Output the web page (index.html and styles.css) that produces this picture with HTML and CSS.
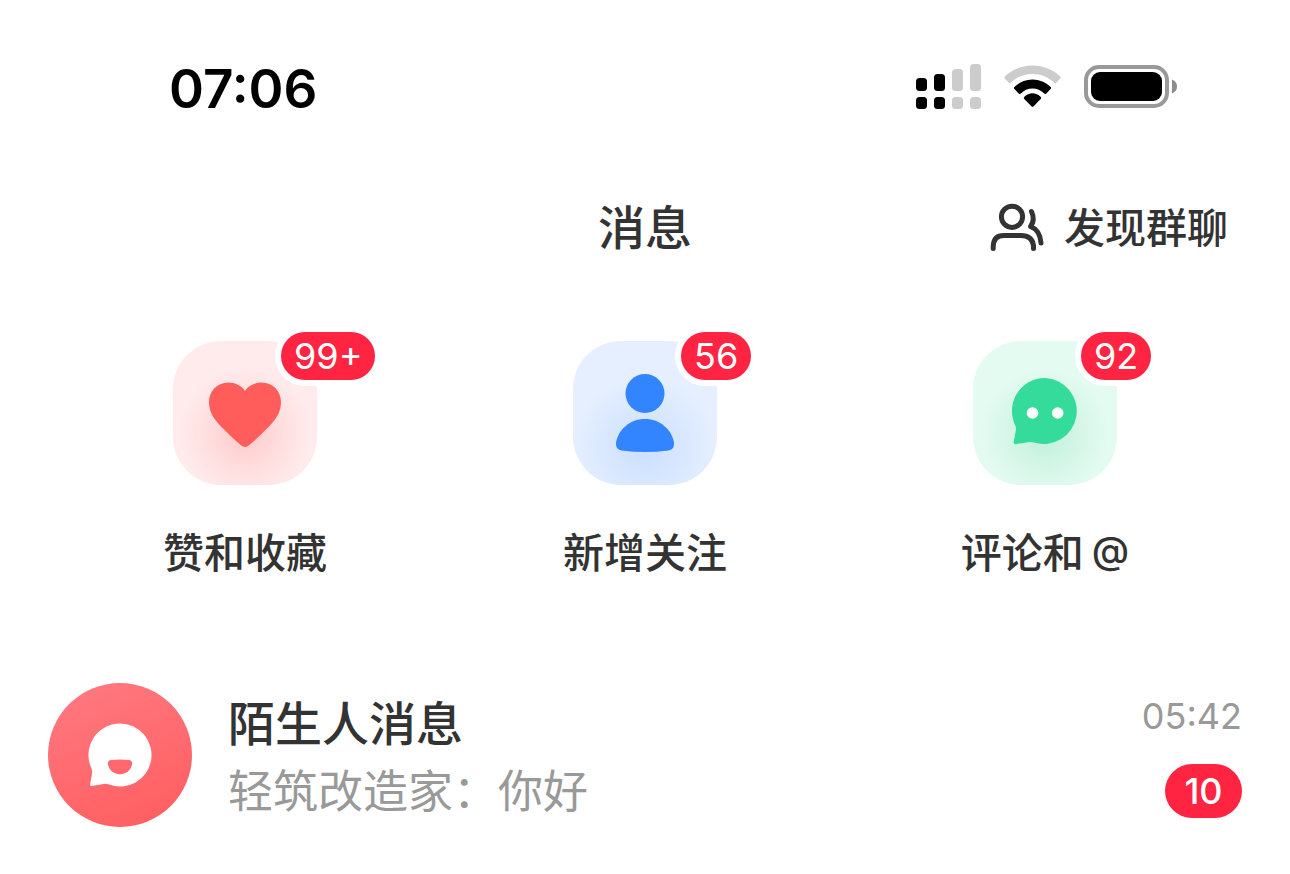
FILE: index.html
```html
<!DOCTYPE html>
<html lang="zh-CN">
<head>
<meta charset="utf-8">
<meta name="viewport" content="width=device-width, initial-scale=1">
<title>消息</title>
<link rel="stylesheet" href="styles.css">
</head>
<body>
<div class="status-bar">
  <time class="clock">07:06</time>
  <div class="indicators">
    <svg class="signal" width="66" height="46" viewBox="0 0 66 46" aria-hidden="true">
      <g fill="#000"><rect x="0" y="14" width="11" height="13" rx="3.5"/><rect x="18" y="10" width="11" height="17" rx="3.5"/><rect x="0" y="33" width="11" height="12" rx="3.5"/><rect x="18" y="33" width="11" height="12" rx="3.5"/></g>
      <g fill="#ccc"><rect x="36" y="5" width="11" height="22" rx="3.5"/><rect x="54" y="0" width="11" height="27" rx="3.5"/><rect x="36" y="33" width="11" height="12" rx="3.5"/><rect x="54" y="33" width="11" height="12" rx="3.5"/></g>
    </svg>
    <svg class="wifi" width="58" height="46" viewBox="0 0 58 46" aria-hidden="true">
      <path fill="#ccc" d="M.8 12.500C8 5.500 18 1.500 28.500 1.500S49 5.500 56.200 12.500q1 1 0 2L52.300 18.700q-1 1-2 0C44.500 13 37 10 28.500 10S12.500 13 6.700 18.700q-1 1-2 0L.8 14.500q-1-1 0-2z"/>
      <path fill="#000" d="M10.400 23C15.200 18.400 21.600 15.600 28.500 15.600s13.300 2.800 18.100 7.400q1 1 0 2l-4.300 4.500q-1 1-2 0c-3.200-2.900-7.300-4.900-11.800-4.900s-8.600 2-11.800 4.900q-1 1-2 0l-4.300-4.500q-1-1 0-2z"/>
      <path fill="#000" d="M20.400 32.700q3.500-3.500 8.100-3.500t8.100 3.500q1.300 1.100.1 2.400l-7.300 7.300q-.9.900-1.800 0l-7.300-7.300q-1.200-1.300.1-2.400z"/>
    </svg>
    <svg class="battery" width="94" height="46" viewBox="0 0 94 46" aria-hidden="true">
      <rect x="2" y="3" width="81" height="39" rx="13" fill="none" stroke="#999" stroke-width="4"/>
      <rect x="7" y="8" width="71" height="29" rx="9" fill="#000"/>
      <path d="M88 15.500q5 2 5 7t-5 7z" fill="#8c8c8c"/>
    </svg>
  </div>
</div>

<header class="top-bar">
  <h1 class="page-title">消息</h1>
  <a class="discover" href="#groups">
    <svg width="58" height="50" viewBox="0 0 58 50" fill="none" stroke="#333" stroke-width="5" stroke-linecap="round" aria-hidden="true">
      <circle cx="24" cy="13.800" r="10.600"/>
      <path d="M5.200 45.500V43.500Q5.500 32.600 16 32.600H33Q44 32.600 45.500 42.500V45.500"/>
      <path stroke-linejoin="round" d="M43.500 8.500Q47.500 17 42.500 23.500Q52 27 53 40"/>
    </svg>
    <span>发现群聊</span>
  </a>
</header>

<nav class="shortcuts">
  <a class="shortcut" href="#likes">
    <span class="tile tile-likes">
      <svg width="144" height="144" viewBox="0 0 144 144" aria-hidden="true"><path fill="#ff5d5c" d="M72 50C75.500 44.700 82 41.600 88.500 41.600C99.500 41.600 108 50 108 61C108 71.500 102.500 79 95.500 86C89.500 92 83 98.500 76 104.300Q72 107.500 68 104.300C61 98.500 54.500 92 48.500 86C41.500 79 36 71.500 36 61C36 50 44.500 41.600 55.500 41.600C62 41.600 68.500 44.700 72 50z"/></svg>
      <span class="badge">99+</span>
    </span>
    <span class="shortcut-label">赞和收藏</span>
  </a>
  <a class="shortcut" href="#followers">
    <span class="tile tile-followers">
      <svg width="144" height="144" viewBox="0 0 144 144" fill="#3385ff" aria-hidden="true"><circle cx="72" cy="52.500" r="19.500"/><path d="M72 78C87 78 98.500 88.500 101 101.500Q102 108 95.500 109.500Q72 112.500 48.500 109.500Q42 108 43 101.500C45.500 88.500 57 78 72 78z"/></svg>
      <span class="badge">56</span>
    </span>
    <span class="shortcut-label">新增关注</span>
  </a>
  <a class="shortcut" href="#comments">
    <span class="tile tile-comments">
      <svg width="144" height="144" viewBox="0 0 144 144" aria-hidden="true"><path fill="#34db9a" d="M72 37A33 33 0 1 1 61 101.500Q57 100.300 52 101.700L42.500 103.200Q40.300 103.200 40.700 101L43 88.500Q43.300 86.500 42.300 84.500A33 33 0 0 1 72 37z"/><circle cx="59.500" cy="72" r="5.800" fill="#fff"/><circle cx="84.700" cy="72" r="5.800" fill="#fff"/></svg>
      <span class="badge">92</span>
    </span>
    <span class="shortcut-label">评论和<span class="at-sign">@</span></span>
  </a>
</nav>

<main class="conversations">
  <a class="conversation" href="#strangers">
    <svg class="avatar" width="144" height="144" viewBox="0 0 144 144" aria-hidden="true">
      <defs><linearGradient id="coral" x1="0.200" y1="0" x2="0.600" y2="1"><stop offset="0" stop-color="#ff7880"/><stop offset="1" stop-color="#ff6062"/></linearGradient></defs>
      <circle cx="72" cy="72" r="72" fill="url(#coral)"/>
      <path fill="#fff" d="M72 40.500A31.500 31.500 0 1 1 61 101.500Q57 100.200 53 101.500L43.500 103Q41.700 103 42.200 101L44.200 89.500Q44.500 87.500 43.500 85.500A31.500 31.500 0 0 1 72 40.500z"/>
      <path fill="#ff696d" d="M63.500 77Q72 76 80.500 77Q85 77.500 84 81.800C82.500 87.500 78 91.300 72 91.300S61.500 87.500 60 81.800Q59 77.500 63.500 77z"/>
    </svg>
    <div class="conversation-text">
      <h2 class="conversation-name">陌生人消息</h2>
      <p class="conversation-preview">轻筑改造家：你好</p>
    </div>
    <div class="conversation-meta">
      <time class="conversation-time">05:42</time>
      <span class="unread">10</span>
    </div>
  </a>
</main>
</body>
</html>
```
FILE: styles.css
```css
* { box-sizing: border-box; }

body {
  margin: 0;
  background: #fff;
  color: #333;
  font-family: Inter, "Noto Sans CJK SC", sans-serif;
}

a { color: inherit; text-decoration: none; }
svg { display: block; }
h1, h2, p { margin: 0; font-weight: 400; }

.status-bar {
  display: flex;
  align-items: flex-start;
  justify-content: space-between;
  padding: 56px 112px 0 169px;
}

.clock {
  color: #000;
  font-size: 53px;
  font-weight: 600;
  line-height: 66px;
}

.indicators {
  display: flex;
  gap: 22px;
  padding-top: 8px;
}

.top-bar {
  display: grid;
  grid-template-columns: 1fr auto 1fr;
  align-items: center;
  margin-top: 74px;
  padding: 0 62px;
}

.page-title {
  grid-column: 2;
  font-size: 47px;
  font-weight: 500;
  line-height: 64px;
}

.discover {
  display: flex;
  align-items: center;
  justify-self: end;
  gap: 18px;
  font-size: 41px;
  font-weight: 500;
  line-height: 64px;
}

.shortcuts {
  display: grid;
  grid-template-columns: repeat(3, 1fr);
  margin-top: 81px;
  padding: 0 45px;
}

.shortcut {
  display: flex;
  flex-direction: column;
  align-items: center;
  gap: 36px;
}

.tile {
  position: relative;
  width: 144px;
  height: 144px;
  border-radius: 48px;
}

.tile-likes { background: radial-gradient(circle at 50% 64%, #ffc9c9 0, #ffdedf 32%, #ffebec 56%); }
.tile-followers { background: radial-gradient(circle at 50% 74%, #cbdfff 0, #dae8ff 32%, #e5efff 56%); }
.tile-comments { background: radial-gradient(circle at 50% 64%, #bdf0dc 0, #d6f6e8 32%, #e4fbf1 56%); }

.badge {
  position: absolute;
  top: -9px;
  left: 108px;
  padding: 0 13px;
  border-radius: 24px;
  background: #ff2442;
  box-shadow: 0 0 0 6px #fff;
  color: #fff;
  font-size: 36px;
  line-height: 48px;
}

.shortcut-label {
  font-size: 41px;
  font-weight: 500;
  line-height: 64px;
}

.at-sign {
  padding-left: 8px;
  font-size: 38px;
  line-height: 1;
  vertical-align: 4px;
}

.conversations { margin-top: 98px; }

.conversation {
  display: flex;
  align-items: center;
  gap: 36px;
  padding: 0 48px;
}

.avatar { flex: none; }

.conversation-text {
  flex: 1;
  padding-top: 6px;
}

.conversation-name {
  font-size: 47px;
  font-weight: 500;
  line-height: 68px;
}

.conversation-preview {
  color: #999;
  font-size: 45px;
  line-height: 68px;
}

.conversation-meta {
  display: flex;
  flex-direction: column;
  align-items: flex-end;
  gap: 24px;
}

.conversation-time {
  color: #999;
  font-size: 36px;
  line-height: 48px;
}

.unread {
  min-width: 77px;
  border-radius: 27px;
  background: #ff2442;
  color: #fff;
  font-size: 36px;
  font-weight: 500;
  line-height: 54px;
  text-align: center;
}
```
